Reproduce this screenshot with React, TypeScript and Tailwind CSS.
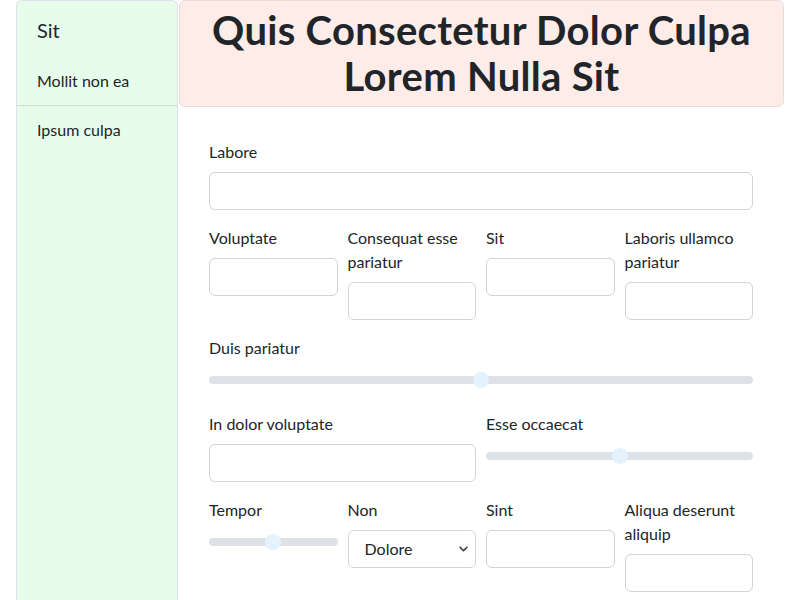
import React from "react";

function Label({ children }: { children: React.ReactNode }) {
  return <label className="mb-2 block text-base leading-6 text-[#212529]">{children}</label>;
}

function TextInput() {
  return (
    <input
      type="text"
      className="block h-[38px] w-full rounded-md border border-[#ced4da] bg-white px-3 outline-none"
    />
  );
}

function Range() {
  return (
    <div className="relative flex h-6 w-full items-center">
      <div className="h-2 w-full rounded-full bg-[#dee2e6]" />
      <div className="absolute left-1/2 top-1/2 h-4 w-4 -translate-x-1/2 -translate-y-1/2 rounded-full bg-[#e3f2fd]" />
    </div>
  );
}

function Select() {
  return (
    <div className="relative h-[38px] w-full rounded-md border border-[#ced4da] bg-white">
      <span className="absolute left-4 top-1/2 -translate-y-1/2 text-base leading-6 text-[#212529]">Dolore</span>
      <svg
        viewBox="0 0 16 16"
        className="absolute right-[6px] top-1/2 h-[11px] w-[11px] -translate-y-1/2"
        aria-hidden="true"
      >
        <path d="M3 5.5l5 5 5-5" fill="none" stroke="#343a40" strokeWidth="2.4" strokeLinecap="round" strokeLinejoin="round" />
      </svg>
    </div>
  );
}

export default function App() {
  return (
    <div
      className="flex h-[600px] overflow-hidden bg-white px-4 text-[#212529]"
      style={{ fontFamily: "Lato, 'Open Sans', sans-serif" }}
    >
      <aside className="w-[162px] shrink-0 rounded-t-md border border-b-0 border-[#dee2e6] bg-[#e8fcec]">
        <div className="border-b border-[#d3dcd6] px-5 pt-[17px] pb-[12px]">
          <div className="text-[20px] leading-6">Sit</div>
          <div className="mt-[27px] text-base leading-6">Mollit non ea</div>
        </div>
        <div className="px-5 pt-[12px] text-base leading-6">Ipsum culpa</div>
      </aside>

      <main className="min-w-0 flex-1">
        <header className="ml-px rounded-md border border-[#e6dedc] bg-[#fdece8] pt-[6px] pb-[7px] text-center">
          <h1 className="text-[40px] font-bold leading-[46px] tracking-[0.3px] text-[#212529]">
            Quis Consectetur Dolor Culpa Lorem Nulla Sit
          </h1>
        </header>

        <form className="px-[31px] pt-[33px]">
          <div className="mb-4">
            <Label>Labore</Label>
            <TextInput />
          </div>

          <div className="mb-4 grid grid-cols-4 gap-x-[10px]">
            <div>
              <Label>Voluptate</Label>
              <TextInput />
            </div>
            <div>
              <Label>Consequat esse pariatur</Label>
              <TextInput />
            </div>
            <div>
              <Label>Sit</Label>
              <TextInput />
            </div>
            <div>
              <Label>Laboris ullamco pariatur</Label>
              <TextInput />
            </div>
          </div>

          <div className="mb-5">
            <Label>Duis pariatur</Label>
            <Range />
          </div>

          <div className="mb-4 grid grid-cols-4 gap-x-[10px]">
            <div className="col-span-2">
              <Label>In dolor voluptate</Label>
              <TextInput />
            </div>
            <div className="col-span-2">
              <Label>Esse occaecat</Label>
              <Range />
            </div>
          </div>

          <div className="mb-4 grid grid-cols-4 gap-x-[10px]">
            <div>
              <Label>Tempor</Label>
              <Range />
            </div>
            <div>
              <Label>Non</Label>
              <Select />
            </div>
            <div>
              <Label>Sint</Label>
              <TextInput />
            </div>
            <div>
              <Label>Aliqua deserunt aliquip</Label>
              <TextInput />
            </div>
          </div>
        </form>
      </main>
    </div>
  );
}
